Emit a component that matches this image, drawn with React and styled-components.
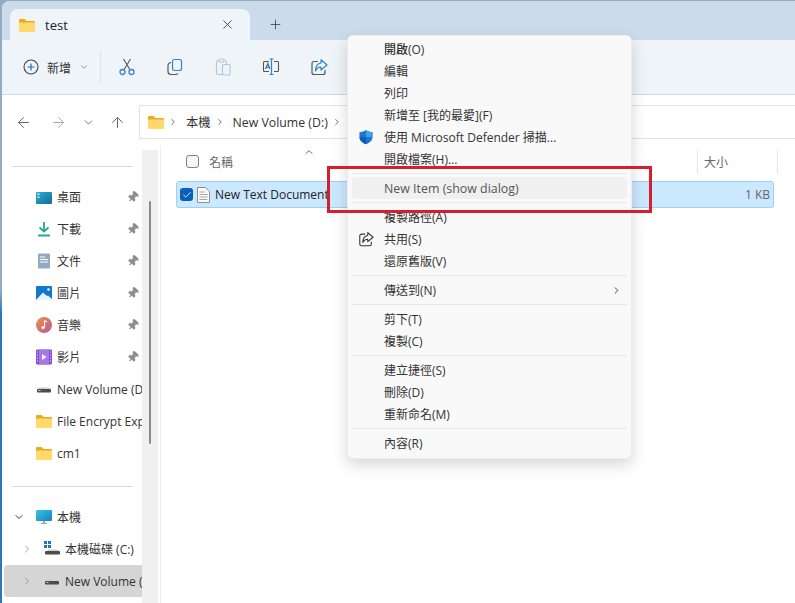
import styled, { createGlobalStyle } from "styled-components";
import {
  ArrowLeft,
  ArrowRight,
  ArrowUp,
  ChevronDown,
  ChevronRight,
  ChevronUp,
  Check,
  Plus,
  X,
  Pin,
} from "lucide-react";

const Global = createGlobalStyle`
  html, body { margin: 0; padding: 0; overflow: hidden; }
  body { font-family: "Noto Sans CJK TC", "Open Sans", sans-serif; font-size: 12px; color: #333; }
  * { box-sizing: border-box; }
`;

const Desktop = styled.div`
  position: relative;
  width: 795px;
  height: 603px;
  overflow: hidden;
  background: linear-gradient(to bottom, #93abc2 0, #93abc2 48%, #2b78bd 52%);
  padding: 1px 0 0 2px;
`;

const Win = styled.div`
  width: 793px;
  height: 602px;
  background: #fff;
  border-top-left-radius: 8px;
  display: flex;
  flex-direction: column;
`;

const TabStrip = styled.div`
  height: 39px;
  background: #ccdbea;
  border-top-left-radius: 8px;
  padding: 8px 0 0 8px;
  display: flex;
  align-items: stretch;
`;

const Tab = styled.div`
  width: 240px;
  background: #eff4f9;
  border-radius: 8px 8px 0 0;
  display: flex;
  align-items: center;
  padding: 0 15px 0 9px;
  font: 13px "Open Sans", sans-serif;
  color: #222;
`;

const TabTitle = styled.span`
  margin-left: 10px;
  flex: 1;
`;

const NewTab = styled.div`
  width: 50px;
  display: flex;
  align-items: center;
  justify-content: center;
  color: #333;
`;

const Toolbar = styled.div`
  height: 55px;
  background: #eff4f9;
  border-bottom: 1px solid #d3d9e0;
  display: flex;
  align-items: center;
  padding-left: 21px;
`;

const NewButton = styled.div`
  width: 77px;
  display: flex;
  align-items: center;
  gap: 8px;
  color: #333;
  font-size: 12px;
`;

const ToolDivider = styled.div`
  width: 1px;
  height: 32px;
  background: #dde3ea;
`;

const ToolIcons = styled.div`
  display: flex;
  align-items: center;
  gap: 30px;
  padding-left: 17px;
`;

const AddressRow = styled.div`
  height: 51px;
  display: flex;
  align-items: center;
  padding: 10px 0 7px 4px;
`;

const NavIcons = styled.div`
  width: 133px;
  display: grid;
  grid-template-columns: 34px 36px 24px 34px;
  justify-items: center;
  align-items: center;
  color: #666;
`;

const AddressBox = styled.div`
  flex: 1;
  height: 34px;
  border: 1px solid #e1e3e6;
  border-right: 0;
  display: flex;
  align-items: center;
  padding-left: 8px;
  font: 12.3px "Open Sans", "Noto Sans CJK TC", sans-serif;
  color: #333;
`;

const Crumb = styled.span`
  margin: 0 8px 0 4px;
  display: flex;
  color: #555;
`;

const Body = styled.div`
  flex: 1;
  display: flex;
  min-height: 0;
`;

const Sidebar = styled.div`
  width: 140px;
  padding-top: 20px;
  overflow: hidden;
`;

const SideRule = styled.div`
  height: 1px;
  margin: ${(p) => p.$top || 0}px 0 14px 10px;
  width: 121px;
  background: #d9d9d9;
`;

const SideRow = styled.div`
  height: 32px;
  display: flex;
  align-items: center;
  padding-left: ${(p) => p.$indent}px;
  white-space: nowrap;
  overflow: hidden;
  border-radius: 4px 0 0 4px;
  margin-left: 2px;
  background: ${(p) => (p.$active ? "#d5d5d5" : "transparent")};
  font: 12px "Open Sans", "Noto Sans CJK TC", sans-serif;
  color: #333;
`;

const SideIcon = styled.span`
  width: 16px;
  height: 16px;
  margin-right: 5px;
  flex: none;
  display: flex;
`;

const SideLabel = styled.span`
  flex: 1;
  overflow: hidden;
`;

const PinWrap = styled.span`
  flex: none;
  width: 15px;
  display: flex;
  color: #8a8f96;
  svg {
    transform: rotate(40deg);
  }
`;

const Caret = styled.span`
  width: 23px;
  flex: none;
  display: flex;
  color: ${(p) => p.$color};
`;

const Track = styled.div`
  width: 16px;
  margin-top: 4px;
  background: #f0f0f0;
  flex: none;
`;

const Thumb = styled.div`
  width: 2px;
  height: 243px;
  margin: 51px 0 0 7px;
  background: #8b8b8b;
  border-radius: 1px;
`;

const Main = styled.div`
  flex: 1;
  border-left: 1px solid #eeeeee;
  margin-left: 2px;
  padding: 0 21px 0 15px;
`;

const Header = styled.div`
  height: 35px;
  display: flex;
  align-items: center;
  color: #666;
  position: relative;
  padding: 0 0 4px 10px;
`;

const HeadCheck = styled.span`
  width: 13px;
  height: 13px;
  border: 1px solid #808080;
  border-radius: 3px;
  background: #f6f6f6;
  margin-right: 10px;
`;

const SortMark = styled.span`
  position: absolute;
  left: 127px;
  top: 0;
  color: #666;
  display: flex;
`;

const SizeCol = styled.span`
  margin-left: auto;
  width: 81px;
  height: 25px;
  border-left: 1px solid #e6e6e6;
  border-right: 1px solid #e6e6e6;
  padding-left: 6px;
  line-height: 25px;
  margin-right: -4px;
`;

const FileRow = styled.div`
  height: 27px;
  background: #cce8ff;
  border: 1px solid #99d1ff;
  border-radius: 3px;
  display: flex;
  align-items: center;
  padding: 0 3px 0 3px;
  font: 12px "Open Sans", sans-serif;
  color: #222;
`;

const RowCheck = styled.span`
  width: 13px;
  height: 13px;
  background: #0a5fb8;
  color: #fff;
  border-radius: 3px;
  display: flex;
  align-items: center;
  justify-content: center;
  margin-right: 4px;
`;

const FileName = styled.span`
  margin-left: 5px;
  flex: 1;
`;

const FileSize = styled.span`
  color: #666;
  font-size: 12px;
`;

const Menu = styled.div`
  position: absolute;
  left: 347px;
  top: 35px;
  width: 285px;
  height: 424px;
  background: #f9f9f9;
  border: 1px solid #ececec;
  border-radius: 6px;
  box-shadow: 0 6px 16px rgba(0, 0, 0, 0.16);
  padding: 2px 4px;
  font: 12px "Open Sans", "Noto Sans CJK TC", sans-serif;
  color: #333;
`;

const MenuItem = styled.div`
  height: 22px;
  display: flex;
  align-items: center;
  padding-left: 32px;
  position: relative;
  border-radius: 4px;
  font-weight: ${(p) => (p.$bold ? 500 : 400)};
  background: ${(p) => (p.$hover ? "#f0f0f0" : "transparent")};
  ${(p) => p.$hover && "font-size: 12.4px; color: #555;"}
`;

const MenuIcon = styled.span`
  position: absolute;
  left: 6px;
  top: 3px;
  display: flex;
`;

const MenuArrow = styled.span`
  margin-left: auto;
  margin-right: 5px;
  display: flex;
`;

const MenuRule = styled.div`
  height: 1px;
  margin: 3px 0;
  background: #e8e8e8;
`;

const RedBox = styled.div`
  position: absolute;
  left: 327px;
  top: 166px;
  width: 325px;
  height: 47px;
  border: 3px solid #d2202d;
`;

const FolderIcon = ({ size = 16 }) => (
  <svg width={size} height={size} viewBox="0 0 16 16">
    <path d="M0 3a1 1 0 0 1 1-1h4.500l2 2H15a1 1 0 0 1 1 1v1H0z" fill="#eda91f" />
    <path d="M0 5.500h16V14a1 1 0 0 1-1 1H1a1 1 0 0 1-1-1z" fill="#ffd969" />
  </svg>
);

const DriveIcon = () => (
  <svg width="16" height="16" viewBox="0 0 16 16">
    <path d="M3 6.500h10l2 2H1z" fill="#cfcfcf" />
    <rect x="1" y="8" width="14" height="3.500" rx="1" fill="#4d4d4d" />
    <rect x="2.500" y="9" width="2" height="1" fill="#d8d8d8" />
  </svg>
);

const DesktopIcon = () => (
  <svg width="16" height="16" viewBox="0 0 16 16">
    <defs>
      <linearGradient id="desk" x1="0" y1="0" x2="1" y2="1">
        <stop offset="0" stopColor="#2db0cf" />
        <stop offset="1" stopColor="#126a9e" />
      </linearGradient>
    </defs>
    <rect y="3" width="16" height="12" rx="1" fill="url(#desk)" />
    <rect x="1.500" y="4.500" width="2" height="1.500" fill="#d9f2fb" />
    <rect x="1.500" y="7.500" width="2" height="1.500" fill="#d9f2fb" />
  </svg>
);

const DownloadIcon = () => (
  <svg width="16" height="16" viewBox="0 0 16 16" fill="none" stroke="#27a88b" strokeWidth="1.800">
    <path d="M8 1v9.500M3.500 6.500 8 10.500l4.500-4M2 14.500h12" />
  </svg>
);

const DocsIcon = () => (
  <svg width="16" height="16" viewBox="0 0 16 16">
    <rect x="2" y="0.500" width="12" height="15" rx="1" fill="#93a9c4" />
    <path d="M4 4h5M4 6.500h8M4 9h8" stroke="#fff" strokeWidth="1.100" />
  </svg>
);

const PictureIcon = () => (
  <svg width="16" height="16" viewBox="0 0 16 16">
    <rect y="1" width="16" height="14" rx="1" fill="#1277cf" />
    <path d="M0 15 7 7.500 11 11l1-.5 4 3.500v1z" fill="#e8f5ff" />
    <circle cx="12.500" cy="4.500" r="1.200" fill="#fff" />
  </svg>
);

const MusicIcon = () => (
  <svg width="16" height="16" viewBox="0 0 16 16">
    <defs>
      <linearGradient id="mus" x1="0" y1="0" x2="1" y2="1">
        <stop offset="0" stopColor="#ef9440" />
        <stop offset="1" stopColor="#b8569c" />
      </linearGradient>
    </defs>
    <circle cx="8" cy="8" r="8" fill="url(#mus)" />
    <path d="M8.500 3.500v7M8.500 3.500 11 5" stroke="#fff" strokeWidth="1.100" />
    <circle cx="7" cy="10.500" r="1.600" fill="#fff" />
  </svg>
);

const VideoIcon = () => (
  <svg width="16" height="16" viewBox="0 0 16 16">
    <rect y="0.500" width="16" height="15" rx="1" fill="#8a4fd6" />
    <rect x="3" y="0.500" width="10" height="15" fill="#a578e6" />
    <path d="M6 5v6l4.500-3z" fill="#fff" />
    <path d="M1 3h1M1 6h1M1 9h1M1 12h1M14 3h1M14 6h1M14 9h1M14 12h1" stroke="#e9dcfb" />
  </svg>
);

const PcIcon = () => (
  <svg width="16" height="16" viewBox="0 0 16 16">
    <defs>
      <linearGradient id="pc" x1="0" y1="0" x2="1" y2="1">
        <stop offset="0" stopColor="#3ac6df" />
        <stop offset="1" stopColor="#1580c4" />
      </linearGradient>
    </defs>
    <rect y="1" width="16" height="11" rx="1" fill="url(#pc)" />
    <path d="M7 12h2v2h2v1H5v-1h2z" fill="#9aa7b0" />
  </svg>
);

const SystemDrive = () => (
  <svg width="16" height="16" viewBox="0 0 16 16">
    <path d="M0 0h3v3H0zM4 0h3v3H4zM0 4h3v3H0zM4 4h3v3H4z" fill="#1a78c2" />
    <path d="M5 8.500h8l2 1.500H3z" fill="#cfcfcf" />
    <rect x="1" y="10" width="15" height="3.500" rx="1" fill="#4d4d4d" />
  </svg>
);

const TextFile = () => (
  <svg width="13" height="16" viewBox="0 0 13 16" fill="#fafafa" stroke="#8f8f8f">
    <path d="M.5.500h8l4 4v11H.5z" />
    <path d="M2.500 5h5M2.500 7.500h8M2.500 10h8M2.500 12.500h8" strokeWidth="0.800" />
  </svg>
);

const ShieldIcon = () => (
  <svg width="16" height="16" viewBox="0 0 16 16">
    <path d="M8 1c2 1.400 4 2 6.500 2v5c0 3.500-3 6-6.500 7.200C4.500 14 1.500 11.500 1.500 8V3C4 3 6 2.400 8 1z" fill="#1976d2" />
    <path d="M8 1c2 1.400 4 2 6.500 2v5H8z" fill="#3ea0ef" />
    <path d="M1.500 8H8v7.200C4.500 14 1.500 11.500 1.500 8z" fill="#0f5fae" />
  </svg>
);

const CircleAdd = () => (
  <svg width="16" height="16" viewBox="0 0 16 16" fill="none">
    <circle cx="8" cy="8" r="7" stroke="#444" strokeWidth="1.100" />
    <path d="M8 4.500v7M4.500 8h7" stroke="#1b6fc0" strokeWidth="1.200" />
  </svg>
);

const CutIcon = () => (
  <svg width="18" height="18" viewBox="0 0 18 18" fill="none">
    <path d="M6 11.800 12.500 1M12 11.800 5.500 1" stroke="#555" strokeWidth="1.100" />
    <circle cx="4.500" cy="14" r="2.500" stroke="#2f86cf" strokeWidth="1.300" />
    <circle cx="13.500" cy="14" r="2.500" stroke="#2f86cf" strokeWidth="1.300" />
  </svg>
);

const CopyIcon = () => (
  <svg width="18" height="18" viewBox="0 0 18 18" fill="none" strokeWidth="1.200">
    <path d="M5 4.500a3 3 0 0 0-3 3v6a3 3 0 0 0 3 3h5a2.500 2.500 0 0 0 2-1" stroke="#555" />
    <rect x="6.500" y="1.500" width="9" height="11" rx="2" stroke="#2f86cf" />
  </svg>
);

const PasteIcon = () => (
  <svg width="18" height="18" viewBox="0 0 18 18" fill="none" strokeWidth="1.100">
    <rect x="2.500" y="2.500" width="10" height="14" rx="1.500" stroke="#bcc3ca" />
    <rect x="5" y="1" width="5" height="3" rx="1" fill="#eff4f9" stroke="#bcc3ca" />
    <rect x="8.500" y="6.500" width="7.500" height="10.500" rx="1" fill="#eff4f9" stroke="#a9c8e4" />
  </svg>
);

const RenameIcon = () => (
  <svg width="18" height="18" viewBox="0 0 18 18" fill="none" strokeWidth="1.100">
    <path d="M7 3.500H2.500a1 1 0 0 0-1 1v8a1 1 0 0 0 1 1H7M12 3.500h3.500a1 1 0 0 1 1 1v8a1 1 0 0 1-1 1H12" stroke="#555" />
    <path d="M9.500 1v15.500M7.500 1h4M7.500 16.500h4" stroke="#2f86cf" strokeWidth="1.200" />
    <path d="M3.500 11 5.800 5.500 8 11M4.400 9.200h2.800" stroke="#35679a" />
  </svg>
);

const ShareIcon = ({ size = 18, box = "#555", arrow = "#2f86cf" }) => (
  <svg width={size} height={size} viewBox="0 0 18 18" fill="none" strokeWidth="1.200">
    <path d="M8 3.500H4a2 2 0 0 0-2 2v9a2 2 0 0 0 2 2h9a2 2 0 0 0 2-2v-2.500" stroke={box} />
    <path d="M11 1.800 17 7l-6 5V9.200C8 9.200 6.500 10.500 5.500 13c0-4.500 2-7.500 5.500-8z" stroke={arrow} strokeLinejoin="round" />
  </svg>
);

const sideItems = [
  { icon: <DesktopIcon />, label: "桌面", pin: true },
  { icon: <DownloadIcon />, label: "下載", pin: true },
  { icon: <DocsIcon />, label: "文件", pin: true },
  { icon: <PictureIcon />, label: "圖片", pin: true },
  { icon: <MusicIcon />, label: "音樂", pin: true },
  { icon: <VideoIcon />, label: "影片", pin: true },
  { icon: <DriveIcon />, label: "New Volume (D:)" },
  { icon: <FolderIcon />, label: "File Encrypt Explorer" },
  { icon: <FolderIcon />, label: "cm1" },
];

const App = () => {
  return (
    <Desktop>
      <Global />
      <Win>
        <TabStrip>
          <Tab>
            <FolderIcon />
            <TabTitle>test</TabTitle>
            <X size={15} strokeWidth={1.2} />
          </Tab>
          <NewTab>
            <Plus size={15} strokeWidth={1.2} />
          </NewTab>
        </TabStrip>
        <Toolbar>
          <NewButton>
            <CircleAdd />
            新增
            <ChevronDown size={10} color="#888" />
          </NewButton>
          <ToolDivider />
          <ToolIcons>
            <CutIcon />
            <CopyIcon />
            <PasteIcon />
            <RenameIcon />
            <ShareIcon />
          </ToolIcons>
        </Toolbar>
        <AddressRow>
          <NavIcons>
            <ArrowLeft size={17} strokeWidth={1.4} />
            <ArrowRight size={17} strokeWidth={1.4} color="#aaa" />
            <ChevronDown size={13} strokeWidth={1.6} />
            <ArrowUp size={17} strokeWidth={1.4} />
          </NavIcons>
          <AddressBox>
            <FolderIcon />
            <Crumb>
              <ChevronRight size={10} strokeWidth={2} />
            </Crumb>
            本機
            <Crumb>
              <ChevronRight size={10} strokeWidth={2} />
            </Crumb>
            New Volume (D:)
            <Crumb>
              <ChevronRight size={10} strokeWidth={2} />
            </Crumb>
          </AddressBox>
        </AddressRow>
        <Body>
          <Sidebar>
            <SideRule />
            {sideItems.map((item) => (
              <SideRow key={item.label} $indent={32}>
                <SideIcon>{item.icon}</SideIcon>
                <SideLabel>{item.label}</SideLabel>
                {item.pin && (
                  <PinWrap>
                    <Pin size={12} fill="#8a8f96" />
                  </PinWrap>
                )}
              </SideRow>
            ))}
            <SideRule $top={17} />
            <SideRow $indent={9}>
              <Caret $color="#333">
                <ChevronDown size={12} strokeWidth={2} />
              </Caret>
              <SideIcon>
                <PcIcon />
              </SideIcon>
              本機
            </SideRow>
            <SideRow $indent={17}>
              <Caret $color="#888">
                <ChevronRight size={12} strokeWidth={1.6} />
              </Caret>
              <SideIcon>
                <SystemDrive />
              </SideIcon>
              本機磁碟 (C:)
            </SideRow>
            <SideRow $indent={17} $active>
              <Caret $color="#888">
                <ChevronRight size={12} strokeWidth={1.6} />
              </Caret>
              <SideIcon>
                <DriveIcon />
              </SideIcon>
              New Volume (D:)
            </SideRow>
          </Sidebar>
          <Track>
            <Thumb />
          </Track>
          <Main>
            <Header>
              <HeadCheck />
              名稱
              <SortMark>
                <ChevronUp size={12} />
              </SortMark>
              <SizeCol>大小</SizeCol>
            </Header>
            <FileRow>
              <RowCheck>
                <Check size={10} strokeWidth={2} />
              </RowCheck>
              <TextFile />
              <FileName>New Text Document</FileName>
              <FileSize>1 KB</FileSize>
            </FileRow>
          </Main>
        </Body>
      </Win>
      <Menu>
        <MenuItem $bold>開啟(O)</MenuItem>
        <MenuItem>編輯</MenuItem>
        <MenuItem>列印</MenuItem>
        <MenuItem>新增至 [我的最愛](F)</MenuItem>
        <MenuItem>
          <MenuIcon>
            <ShieldIcon />
          </MenuIcon>
          使用 Microsoft Defender 掃描...
        </MenuItem>
        <MenuItem>開啟檔案(H)...</MenuItem>
        <MenuRule />
        <MenuItem $hover>New Item (show dialog)</MenuItem>
        <MenuRule />
        <MenuItem>複製路徑(A)</MenuItem>
        <MenuItem>
          <MenuIcon>
            <ShareIcon size={16} box="#333" arrow="#333" />
          </MenuIcon>
          共用(S)
        </MenuItem>
        <MenuItem>還原舊版(V)</MenuItem>
        <MenuRule />
        <MenuItem>
          傳送到(N)
          <MenuArrow>
            <ChevronRight size={11} />
          </MenuArrow>
        </MenuItem>
        <MenuRule />
        <MenuItem>剪下(T)</MenuItem>
        <MenuItem>複製(C)</MenuItem>
        <MenuRule />
        <MenuItem>建立捷徑(S)</MenuItem>
        <MenuItem>刪除(D)</MenuItem>
        <MenuItem>重新命名(M)</MenuItem>
        <MenuRule />
        <MenuItem>內容(R)</MenuItem>
      </Menu>
      <RedBox />
    </Desktop>
  );
};

export default App;
